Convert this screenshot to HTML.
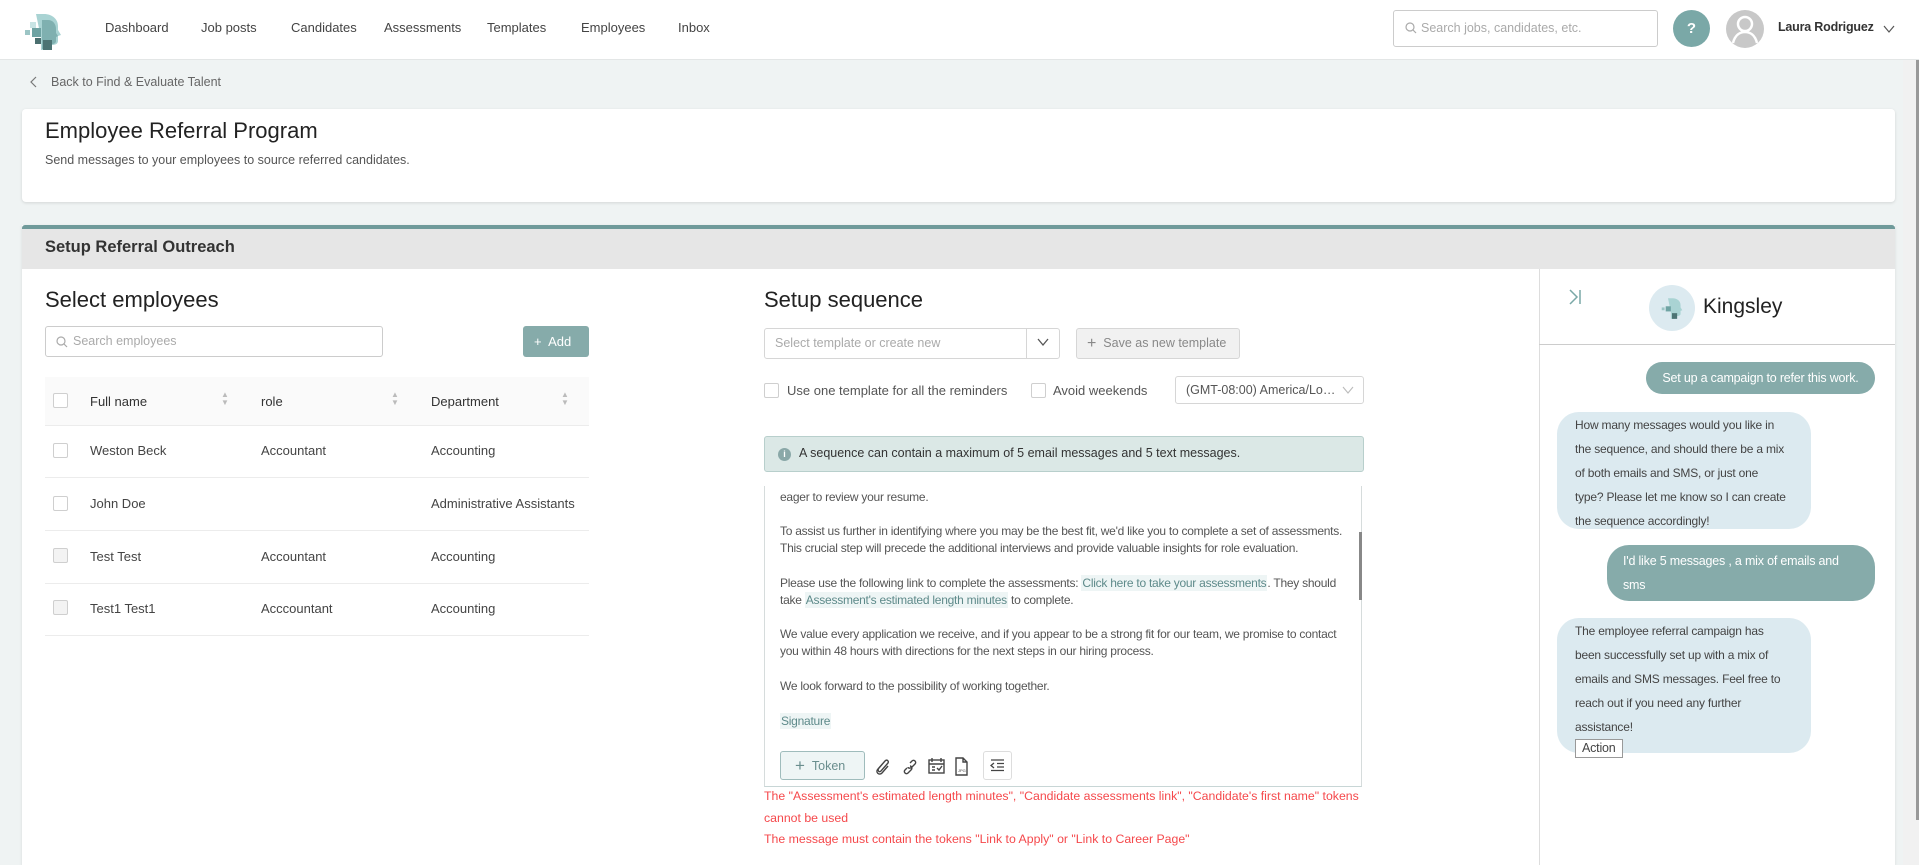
<!DOCTYPE html>
<html><head><meta charset="utf-8">
<style>
*{box-sizing:border-box;margin:0;padding:0}
body{width:1919px;height:865px;overflow:hidden;background:#eff3f3;font-family:"Liberation Sans",sans-serif;color:#333;position:relative}
.a{position:absolute}
.nav{left:0;top:0;width:1919px;height:60px;background:#fff;border-bottom:1px solid #e3e6e6}
.nav .i{position:absolute;top:20px;font-size:13px;color:#444}
.cb{position:absolute;width:15px;height:15px;border:1px solid #cfcfcf;border-radius:2px;background:#fff}
.t{font-size:13px;color:#444;position:absolute;white-space:nowrap}
.em{position:absolute;left:780px;font-size:12px;letter-spacing:-0.25px;color:#555;white-space:nowrap;line-height:17px}
.tok{background:#eef5f5;color:#5e8a8a;padding:1px 1px}
.bub{position:absolute;font-size:12.5px;letter-spacing:-0.2px;line-height:24px;border-radius:22px;padding:6px 18px;white-space:nowrap}
.bot{background:#dceaf0;color:#444}
.usr{background:#86abaa;color:#fff}
.err{position:absolute;left:764px;font-size:12.3px;color:#f5484b;white-space:nowrap}
</style></head><body>

<div class="a nav">
  <svg class="a" style="left:22px;top:10px" width="42" height="42" viewBox="0 0 42 42">
    <path d="M14 4h8c8 0 14 5 14 12l0 4 3 5-3 1v5c0 3-3 4-6 4h-3v5H19V28z" fill="#a9d3d3"/>
    <path d="M20 10h6c5 0 8 4 8 9v4l2 3-2 1v4c0 2-2 3-4 3h-3v5h-7z" fill="#7fb0b0"/>
    <rect x="8" y="12" width="6" height="6" fill="#c8e4e4"/>
    <rect x="3" y="20" width="5" height="5" fill="#9cc5c5"/>
    <rect x="10" y="18" width="9" height="9" fill="#6fa3a3"/>
    <rect x="13" y="28" width="6" height="6" fill="#4b6f6f"/>
    <rect x="21" y="30" width="9" height="10" fill="#4c7474"/>
  </svg>
  <div class="i" style="left:105px">Dashboard</div>
  <div class="i" style="left:201px">Job posts</div>
  <div class="i" style="left:291px">Candidates</div>
  <div class="i" style="left:384px">Assessments</div>
  <div class="i" style="left:487px">Templates</div>
  <div class="i" style="left:581px">Employees</div>
  <div class="i" style="left:678px">Inbox</div>
  <div class="a" style="left:1393px;top:10px;width:265px;height:37px;border:1px solid #ccc;border-radius:3px"></div>
  <svg class="a" style="left:1405px;top:22px" width="12" height="12" viewBox="0 0 12 12"><circle cx="5" cy="5" r="4" fill="none" stroke="#aaa" stroke-width="1.2"/><path d="M8 8l3 3" stroke="#aaa" stroke-width="1.2"/></svg>
  <div class="a" style="left:1421px;top:21px;font-size:12.5px;color:#aaa">Search jobs, candidates, etc.</div>
  <div class="a" style="left:1673px;top:10px;width:37px;height:37px;border-radius:50%;background:#7aa8a7;color:#fff;font-weight:bold;font-size:15px;text-align:center;line-height:37px">?</div>
  <div class="a" style="left:1726px;top:10px;width:38px;height:38px;border-radius:50%;background:#c8c8c8;overflow:hidden">
    <svg width="38" height="38" viewBox="0 0 38 38"><circle cx="19" cy="14" r="7" fill="none" stroke="#fff" stroke-width="2.5"/><path d="M7 33c2-8 7-11 12-11s10 3 12 11" fill="none" stroke="#fff" stroke-width="2.5"/></svg>
  </div>
  <div class="a" style="left:1778px;top:20px;font-size:12.5px;font-weight:bold;color:#333;letter-spacing:-0.2px">Laura Rodriguez</div>
  <svg class="a" style="left:1883px;top:25px" width="12" height="8" viewBox="0 0 12 8"><path d="M1 1l5 6 5-6" fill="none" stroke="#555" stroke-width="1.2"/></svg>
</div>

<svg class="a" style="left:30px;top:76px" width="8" height="12" viewBox="0 0 8 12"><path d="M6 1L1 6l5 5" fill="none" stroke="#777" stroke-width="1.2"/></svg>
<div class="a" style="left:51px;top:75px;font-size:12.5px;color:#666">Back to Find &amp; Evaluate Talent</div>

<div class="a" style="left:22px;top:109px;width:1873px;height:93px;background:#fff;border-radius:4px;box-shadow:0 1px 3px rgba(0,0,0,.12)"></div>
<div class="a" style="left:45px;top:118px;font-size:22px;color:#222">Employee Referral Program</div>
<div class="a" style="left:45px;top:153px;font-size:12.5px;color:#555">Send messages to your employees to source referred candidates.</div>

<div class="a" style="left:22px;top:225px;width:1873px;height:640px;background:#fff;box-shadow:0 1px 3px rgba(0,0,0,.1)"></div>
<div class="a" style="left:22px;top:225px;width:1873px;height:44px;background:#e6e6e6;border-top:4px solid #6f9a9a;border-radius:3px 3px 0 0"></div>
<div class="a" style="left:45px;top:238px;font-size:16.5px;font-weight:bold;color:#333">Setup Referral Outreach</div>

<!-- left -->
<div class="a" style="left:45px;top:287px;font-size:22px;color:#222">Select employees</div>
<div class="a" style="left:45px;top:326px;width:338px;height:31px;border:1px solid #ccc;border-radius:3px"></div>
<svg class="a" style="left:56px;top:336px" width="12" height="12" viewBox="0 0 12 12"><circle cx="5" cy="5" r="4" fill="none" stroke="#aaa" stroke-width="1.2"/><path d="M8 8l3 3" stroke="#aaa" stroke-width="1.2"/></svg>
<div class="a" style="left:73px;top:334px;font-size:12.5px;color:#aaa">Search employees</div>
<div class="a" style="left:523px;top:326px;width:66px;height:31px;background:#86abaa;border-radius:3px;color:#fff;font-size:13px;line-height:31px;padding-left:11px">+&nbsp; Add</div>

<div class="a" style="left:45px;top:377px;width:544px;height:49px;background:#fafafa;border-bottom:1px solid #ececec"></div>
<div class="cb" style="left:53px;top:393px"></div>
<div class="t" style="left:90px;top:394px;color:#333">Full name</div>
<div class="t" style="left:261px;top:394px;color:#333">role</div>
<div class="t" style="left:431px;top:394px;color:#333">Department</div>
<div class="a" style="left:221px;top:391px;font-size:8px;color:#bbb;line-height:8px">▲<br>▼</div>
<div class="a" style="left:391px;top:391px;font-size:8px;color:#bbb;line-height:8px">▲<br>▼</div>
<div class="a" style="left:561px;top:391px;font-size:8px;color:#bbb;line-height:8px">▲<br>▼</div>

<div class="a" style="left:45px;top:477px;width:544px;height:1px;background:#ececec"></div>
<div class="a" style="left:45px;top:530px;width:544px;height:1px;background:#ececec"></div>
<div class="a" style="left:45px;top:583px;width:544px;height:1px;background:#ececec"></div>
<div class="a" style="left:45px;top:635px;width:544px;height:1px;background:#ececec"></div>
<div class="cb" style="left:53px;top:443px"></div>
<div class="cb" style="left:53px;top:496px"></div>
<div class="cb" style="left:53px;top:548px;background:#f3f3f3"></div>
<div class="cb" style="left:53px;top:600px;background:#f3f3f3"></div>
<div class="t" style="left:90px;top:443px">Weston Beck</div><div class="t" style="left:261px;top:443px">Accountant</div><div class="t" style="left:431px;top:443px">Accounting</div>
<div class="t" style="left:90px;top:496px">John Doe</div><div class="t" style="left:431px;top:496px">Administrative Assistants</div>
<div class="t" style="left:90px;top:549px">Test Test</div><div class="t" style="left:261px;top:549px">Accountant</div><div class="t" style="left:431px;top:549px">Accounting</div>
<div class="t" style="left:90px;top:601px">Test1 Test1</div><div class="t" style="left:261px;top:601px">Acccountant</div><div class="t" style="left:431px;top:601px">Accounting</div>

<!-- middle -->
<div class="a" style="left:764px;top:287px;font-size:22px;color:#222">Setup sequence</div>
<div class="a" style="left:764px;top:328px;width:296px;height:31px;border:1px solid #d6d6d6;border-radius:3px"></div>
<div class="a" style="left:1026px;top:328px;width:1px;height:31px;background:#d6d6d6"></div>
<svg class="a" style="left:1036px;top:338px" width="14" height="9" viewBox="0 0 14 9"><path d="M2 1l5 6 5-6" fill="none" stroke="#555" stroke-width="1.3"/></svg>
<div class="a" style="left:775px;top:336px;font-size:12.5px;color:#aaa">Select template or create new</div>
<div class="a" style="left:1076px;top:328px;width:164px;height:31px;border:1px solid #d6d6d6;border-radius:3px;background:#f1f1f1;font-size:12.5px;color:#888;line-height:29px;padding-left:10px"><span style="font-size:16px;vertical-align:-1px">+</span>&nbsp;&nbsp;Save as new template</div>

<div class="cb" style="left:764px;top:383px"></div>
<div class="t" style="left:787px;top:383px;color:#555">Use one template for all the reminders</div>
<div class="cb" style="left:1031px;top:383px"></div>
<div class="t" style="left:1053px;top:383px;color:#555">Avoid weekends</div>
<div class="a" style="left:1175px;top:376px;width:189px;height:28px;border:1px solid #d6d6d6;border-radius:3px;font-size:12.5px;color:#555;line-height:26px;padding-left:10px">(GMT-08:00) America/Lo…</div>
<svg class="a" style="left:1342px;top:386px" width="12" height="8" viewBox="0 0 12 8"><path d="M1 1l5 6 5-6" fill="none" stroke="#bbb" stroke-width="1.1"/></svg>

<div class="a" style="left:764px;top:436px;width:600px;height:36px;background:#dbe8e6;border:1px solid #b8cfcc;border-radius:3px"></div>
<div class="a" style="left:778px;top:448px;width:13px;height:13px;border-radius:50%;background:#8aa8a8;color:#fff;font-size:9px;text-align:center;line-height:13px;font-weight:bold">i</div>
<div class="a" style="left:799px;top:446px;font-size:12.5px;color:#333">A sequence can contain a maximum of 5 email messages and 5 text messages.</div>

<div class="a" style="left:764px;top:486px;width:598px;height:301px;border-left:1px solid #d6dcdc;border-right:1px solid #d6dcdc;border-bottom:1px solid #c8d6d6"></div>
<div class="a" style="left:1359px;top:532px;width:3px;height:68px;background:#888"></div>
<div class="em" style="top:489px">eager to review your resume.</div>
<div class="em" style="top:523px">To assist us further in identifying where you may be the best fit, we'd like you to complete a set of assessments.</div>
<div class="em" style="top:540px">This crucial step will precede the additional interviews and provide valuable insights for role evaluation.</div>
<div class="em" style="top:575px">Please use the following link to complete the assessments: <span class="tok">Click here to take your assessments</span>. They should</div>
<div class="em" style="top:592px">take <span class="tok">Assessment's estimated length minutes</span> to complete.</div>
<div class="em" style="top:626px">We value every application we receive, and if you appear to be a strong fit for our team, we promise to contact</div>
<div class="em" style="top:643px">you within 48 hours with directions for the next steps in our hiring process.</div>
<div class="em" style="top:678px">We look forward to the possibility of working together.</div>
<div class="em" style="top:713px"><span class="tok">Signature</span></div>

<div class="a" style="left:780px;top:751px;width:85px;height:29px;border:1px solid #9fbcbc;border-radius:3px;background:#eef5f5;color:#6a8e8e;font-size:12.5px;line-height:27px;padding-left:14px"><span style="font-size:17px;vertical-align:-1px">+</span>&nbsp;&nbsp;Token</div>
<svg class="a" style="left:873px;top:755px" width="110" height="22" viewBox="0 0 110 22" fill="none" stroke="#444" stroke-width="1.4">
  <path d="M12 6l-6 7c-2 2 0 5 2 3l7-8c1-2-1-4-3-2l-7 8c-3 3 1 7 4 4l6-7"/>
  <path d="M37 8l2-2c2-2 5 1 3 3l-3 3c-2 2-4 1-4 0M34 13l-2 2c-2 2 1 5 3 3l3-3c2-2 0-4-1-4"/>
  <rect x="56" y="5" width="15" height="13"/><path d="M56 9h15M59 3v4M68 3v4M59 12h3M59 15h3M64 13l2 2 3-4"/>
  <path d="M83 3h7l4 4v13H83zM90 3v4h4"/><text x="85" y="17" font-size="4" fill="#444" stroke="none" font-family="Liberation Sans">JPG</text>
</svg>
<div class="a" style="left:983px;top:751px;width:29px;height:29px;border:1px solid #ddd;border-radius:3px"></div>
<svg class="a" style="left:990px;top:759px" width="15" height="13" viewBox="0 0 15 13" stroke="#444" stroke-width="1.3"><path d="M1 1h13M7 4.5h7M7 8h7M1 11.5h13M4 4l-3 2.5 3 2.5" fill="none"/></svg>

<div class="err" style="top:789px">The "Assessment's estimated length minutes", "Candidate assessments link", "Candidate's first name" tokens</div>
<div class="err" style="top:811px">cannot be used</div>
<div class="err" style="top:832px">The message must contain the tokens "Link to Apply" or "Link to Career Page"</div>

<!-- right panel -->
<div class="a" style="left:1539px;top:269px;width:1px;height:596px;background:#ddd"></div>
<div class="a" style="left:1539px;top:344px;width:356px;height:1px;background:#ccc"></div>
<svg class="a" style="left:1568px;top:288px" width="14" height="18" viewBox="0 0 14 18" fill="none" stroke="#7aa8a7" stroke-width="1.5"><path d="M2 2l7 7-7 7M12 2v14"/></svg>
<div class="a" style="left:1649px;top:285px;width:46px;height:46px;border-radius:50%;background:#dceaf0"></div>
<svg class="a" style="left:1660px;top:296px" width="24" height="24" viewBox="0 0 42 42">
  <path d="M14 4h8c8 0 14 5 14 12l0 4 3 5-3 1v5c0 3-3 4-6 4h-3v5H19V28z" fill="#a9d3d3"/>
  <rect x="3" y="20" width="5" height="5" fill="#9cc5c5"/><rect x="10" y="18" width="9" height="9" fill="#6fa3a3"/><rect x="21" y="30" width="9" height="10" fill="#4c7474"/>
</svg>
<div class="a" style="left:1703px;top:295px;font-size:21px;color:#222">Kingsley</div>

<div class="bub usr" style="left:1646px;top:362px;height:32px;line-height:20px;padding:6px 10px;width:229px;text-align:center">Set up a campaign to refer this work.</div>
<div class="bub bot" style="left:1557px;top:412px;width:254px;height:117px;padding:1px 10px 0 18px;font-size:12px">How many messages would you like in<br>the sequence, and should there be a mix<br>of both emails and SMS, or just one<br>type? Please let me know so I can create<br>the sequence accordingly!</div>
<div class="bub usr" style="left:1607px;top:545px;width:268px;height:56px;padding:4px 12px 0 16px;line-height:24px">I'd like 5 messages , a mix of emails and<br>sms</div>
<div class="bub bot" style="left:1557px;top:618px;width:254px;height:135px;padding:1px 10px 0 18px;font-size:12px">The employee referral campaign has<br>been successfully set up with a mix of<br>emails and SMS messages. Feel free to<br>reach out if you need any further<br>assistance!<br><span style="display:inline-block;border:1px solid #999;background:#fff;line-height:17px;padding:0 6px;font-size:12.5px;vertical-align:top">Action</span></div>

<div class="a" style="left:1903px;top:60px;width:16px;height:805px;background:#f1f1f1"></div>
<div class="a" style="left:1916px;top:60px;width:3px;height:760px;background:#999"></div>
</body></html>
